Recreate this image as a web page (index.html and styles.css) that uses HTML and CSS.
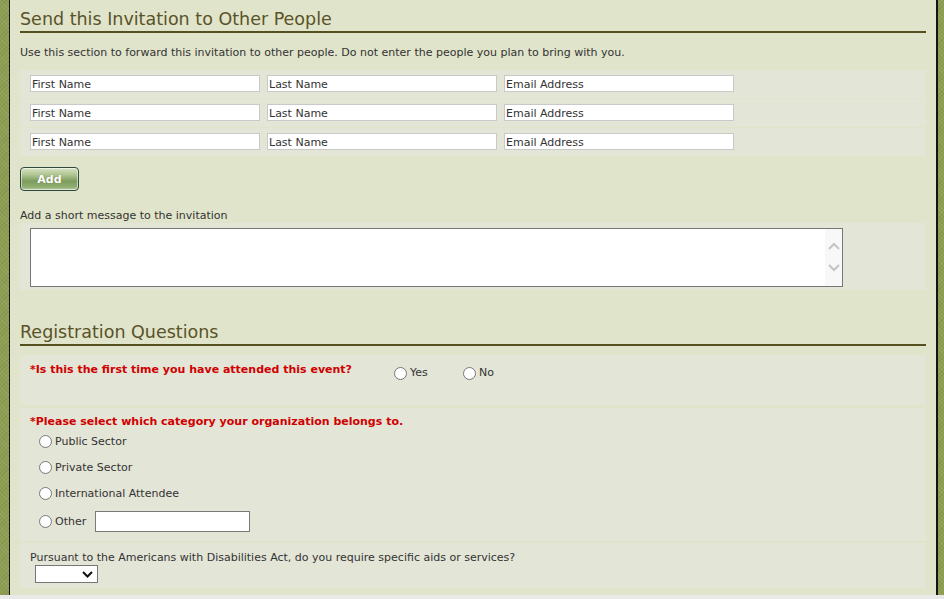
FILE: index.html
```html
<!DOCTYPE html>
<html>
<head>
<meta charset="utf-8">
<title>Invitation</title>
<link rel="stylesheet" href="styles.css">
</head>
<body>
<div class="shell">
  <div class="frame">
    <section class="invite">
      <h2 class="sec-title">Send this Invitation to Other People</h2>
      <p class="intro">Use this section to forward this invitation to other people. Do not enter the people you plan to bring with you.</p>
      <div class="people">
        <div class="person-row">
          <input class="field" type="text" value="First Name">
          <input class="field" type="text" value="Last Name">
          <input class="field" type="text" value="Email Address">
        </div>
        <div class="person-row">
          <input class="field" type="text" value="First Name">
          <input class="field" type="text" value="Last Name">
          <input class="field" type="text" value="Email Address">
        </div>
        <div class="person-row">
          <input class="field" type="text" value="First Name">
          <input class="field" type="text" value="Last Name">
          <input class="field" type="text" value="Email Address">
        </div>
      </div>
      <button class="btn-add" type="button">Add</button>
      <label class="msg-label">Add a short message to the invitation</label>
      <div class="msg-band">
        <div class="msg-box">
          <textarea class="msg-text"></textarea>
          <div class="fake-scroll">
            <svg class="chev" width="12" height="8" viewBox="0 0 12 8"><path d="M1 7 L6 2 L11 7" fill="none" stroke="#c4c4c4" stroke-width="2"/></svg>
            <svg class="chev" width="12" height="8" viewBox="0 0 12 8"><path d="M1 1 L6 6 L11 1" fill="none" stroke="#c4c4c4" stroke-width="2"/></svg>
          </div>
        </div>
      </div>
    </section>

    <section class="questions">
      <h2 class="sec-title">Registration Questions</h2>
      <div class="q-band q-first">
        <div class="q-inline">
          <span class="q-text req q-wide">*Is this the first time you have attended this event?</span>
          <label class="inline-opt"><input class="radio" type="radio" name="first"><span>Yes</span></label>
          <label class="inline-opt"><input class="radio" type="radio" name="first"><span>No</span></label>
        </div>
      </div>
      <div class="q-band q-second">
        <div class="q-text req">*Please select which category your organization belongs to.</div>
        <div class="opts">
          <label class="opt"><input class="radio" type="radio" name="cat"><span>Public Sector</span></label>
          <label class="opt"><input class="radio" type="radio" name="cat"><span>Private Sector</span></label>
          <label class="opt"><input class="radio" type="radio" name="cat"><span>International Attendee</span></label>
          <label class="opt opt-other"><input class="radio" type="radio" name="cat"><span>Other</span><input class="other-field" type="text"></label>
        </div>
      </div>
      <div class="q-band q-third">
        <div class="q-text">Pursuant to the Americans with Disabilities Act, do you require specific aids or services?</div>
        <div class="select-wrap">
          <select class="sel"><option></option><option>Yes</option><option>No</option></select>
          <svg class="sel-chev" width="11" height="7" viewBox="0 0 11 7"><path d="M1 1 L5.5 5.5 L10 1" fill="none" stroke="#111" stroke-width="2"/></svg>
        </div>
      </div>
    </section>
  </div>
</div>
</body>
</html>
```

FILE: styles.css
```css
html, body {
  margin: 0;
  padding: 0;
}
body {
  background: #e9e9e9;
  font-family: "DejaVu Sans", Verdana, sans-serif;
  font-size: 11px;
  color: #333;
}
.shell {
  background-color: #8d9e52;
  background-image:
    repeating-linear-gradient(45deg, rgba(255,255,255,0.07) 0 1px, transparent 1px 3px),
    repeating-linear-gradient(-45deg, rgba(0,0,0,0.06) 0 1px, transparent 1px 3px);
  padding: 0 6px 0 9px;
}
.frame {
  background: #e0e4ca;
  border-left: 1px solid #141414;
  border-right: 2px solid #141414;
  padding: 0 10px 7px 10px;
}
.sec-title {
  margin: 0;
  padding: 8px 0 1px;
  font-size: 17.5px;
  line-height: 22px;
  font-weight: normal;
  color: #5a5228;
  border-bottom: 2px solid #55501f;
}
.intro {
  margin: 12px 0 10px;
  line-height: 14px;
  padding-top: 1px;
}
.people {
  display: flex;
  flex-direction: column;
  gap: 1px;
}
.person-row {
  background: #e3e5d7;
  padding: 5px 10px 6px;
  display: flex;
  gap: 7px;
}
.field {
  width: 230px;
  height: 17px;
  box-sizing: border-box;
  border: 1px solid #c9c9c9;
  padding: 1px 1px 0;
  margin: 0;
  font: 11px "DejaVu Sans", Verdana, sans-serif;
  color: #333;
  background: #fff;
  outline: none;
}
.btn-add {
  display: block;
  margin: 11px 0 0;
  width: 59px;
  height: 24px;
  padding: 0;
  border: 1px solid #2f4a3c;
  border-radius: 4px;
  background: linear-gradient(#d9e4c4 0%, #a9c08a 35%, #7d9c5c 60%, #8fac70 85%, #b5c99c 100%);
  box-shadow: inset 0 0 0 1px rgba(255,255,255,0.55);
  color: #fff;
  font: bold 11px "DejaVu Sans", Verdana, sans-serif;
  text-shadow: 0 0 1px rgba(60,80,40,0.5);
}
.msg-label {
  display: block;
  margin-top: 18px;
  line-height: 14px;
}
.msg-band {
  margin-top: 0;
  background: #e3e5d7;
  padding: 5px 10px 3px;
}
.msg-box {
  width: 813px;
  height: 59px;
  box-sizing: border-box;
  border: 1px solid #767676;
  background: #fff;
  display: flex;
}
.msg-text {
  flex: 1;
  border: 0;
  resize: none;
  outline: none;
  margin: 0;
  padding: 2px;
  font: 11px "DejaVu Sans", Verdana, sans-serif;
}
.fake-scroll {
  width: 17px;
  background: #f8f8f8;
  display: flex;
  flex-direction: column;
  align-items: center;
  justify-content: space-between;
  padding: 13px 0 14px;
  box-sizing: border-box;
}
.chev { display: block; }

.questions {
  margin-top: 23px;
}
.q-band {
  background: #e3e5d7;
  padding: 7px 10px;
}
.q-text {
  line-height: 14px;
}
.req {
  color: #d00000;
  font-weight: bold;
}
.q-first {
  margin-top: 9px;
  min-height: 50px;
  box-sizing: border-box;
  padding-top: 8px;
}
.q-inline {
  display: flex;
  align-items: flex-start;
}
.q-wide {
  width: 364px;
  flex: none;
}
.inline-opt {
  display: flex;
  align-items: center;
  width: 69px;
  margin-top: 3px;
  line-height: 14px;
}
.radio {
  appearance: none;
  -webkit-appearance: none;
  width: 13px;
  height: 13px;
  margin: 0 3px 0 0;
  border: 1px solid #7a7a7a;
  border-radius: 50%;
  background: radial-gradient(circle at 50% 40%, #ffffff 0%, #ffffff 55%, #ececec 100%);
  box-sizing: border-box;
  flex: none;
}
.q-second {
  margin-top: 3px;
  padding-bottom: 4px;
}
.opts {
  padding-left: 9px;
  margin-top: -1px;
}
.opt {
  display: flex;
  align-items: center;
  height: 26px;
}
.opt-other {
  height: 31px;
}
.other-field {
  margin: -1px 0 0 9px;
  width: 155px;
  height: 21px;
  box-sizing: border-box;
  border: 1px solid #7a7a7a;
  background: #fff;
  padding: 0 2px;
  font: 11px "DejaVu Sans", Verdana, sans-serif;
  outline: none;
}
.q-third {
  margin-top: 2px;
  padding: 8px 10px 5px;
}
.select-wrap {
  position: relative;
  width: 63px;
  height: 18px;
  margin-left: 5px;
}
.sel {
  appearance: none;
  -webkit-appearance: none;
  display: block;
  width: 63px;
  height: 18px;
  margin: 0;
  box-sizing: border-box;
  border: 1px solid #767676;
  border-radius: 0;
  background: #fff;
  font: 11px "DejaVu Sans", Verdana, sans-serif;
  outline: none;
}
.sel-chev {
  position: absolute;
  right: 5px;
  top: 6px;
  pointer-events: none;
}
```
